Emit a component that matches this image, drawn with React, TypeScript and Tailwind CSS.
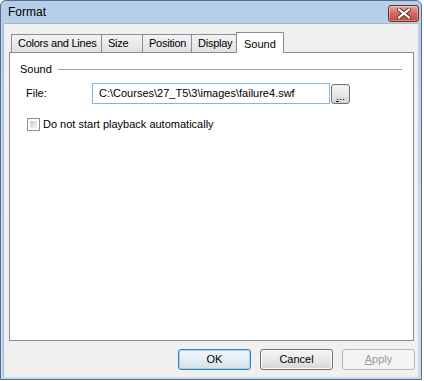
import React from "react";

const TABS = [
  { label: "Colors and Lines", w: "w-[91px]" },
  { label: "Size", w: "w-[42px]" },
  { label: "Position", w: "w-[50px]" },
  { label: "Display", w: "w-[46px]" },
];

const font = { fontFamily: '"Liberation Sans", Arial, sans-serif' };

const CloseButton = () => (
  <div className="w-[31px] h-[17px] rounded-[3px] border border-[#6b2f2a] bg-gradient-to-b from-[#e8a99f] via-[#d0695c] to-[#c44a3a] flex items-center justify-center shadow-[inset_0_0_0_1px_rgba(255,255,255,0.35)]">
    <svg width="14" height="11" viewBox="0 0 14 11">
      <path
        d="M2 1.5 L12 9.5 M12 1.5 L2 9.5"
        stroke="#5a2a24"
        strokeWidth="4"
        strokeLinecap="square"
      />
      <path
        d="M2 1.5 L12 9.5 M12 1.5 L2 9.5"
        stroke="#ffffff"
        strokeWidth="2.2"
        strokeLinecap="square"
      />
    </svg>
  </div>
);

const DialogButton = ({
  children,
  variant = "normal",
}: {
  children: React.ReactNode;
  variant?: "default" | "normal" | "disabled";
}) => {
  const base =
    "w-[73px] h-[21px] rounded-[3px] border flex items-center justify-center text-[11px]";
  const styles = {
    default:
      "border-[#3c7fb1] bg-gradient-to-b from-[#f2f7fb] via-[#e6eef5] to-[#d3e0ea] text-black shadow-[inset_0_0_0_1px_#9fd5f5]",
    normal:
      "border-[#707070] bg-gradient-to-b from-[#f4f4f4] via-[#e9e9e9] to-[#d6d6d6] text-black shadow-[inset_0_0_0_1px_#fcfcfc]",
    disabled: "border-[#b5b8bb] bg-[#f4f4f4] text-[#9a9a9a]",
  };
  return <div className={`${base} ${styles[variant]}`}>{children}</div>;
};

export default function App() {
  return (
    <div className="w-[424px] h-[381px] bg-white" style={font}>
      <div className="w-[422px] h-[380px] border border-[#566f8b] rounded-t-[6px] bg-gradient-to-b from-[#b6cee9] via-[#c4d8ee] to-[#c6daef] flex flex-col">
        {/* Title bar */}
        <div className="h-[22px] flex items-start justify-between">
          <span className="pl-[7px] pt-[4px] text-[12px] text-black leading-[14px]">
            Format
          </span>
          <div className="pt-[4px] pr-[2px]">
            <CloseButton />
          </div>
        </div>

        {/* Body */}
        <div className="ml-[2px] mr-[3px] mb-[2px] flex-1 bg-[#f0f0f0] border-t border-l border-[#a9b8c9] flex flex-col text-[11px] text-black">
          {/* Tabs */}
          <div className="pl-[7px] pt-[8px] h-[28px] flex items-end">
            {TABS.map((t) => (
              <div
                key={t.label}
                className={`${t.w} h-[18px] -mr-px border border-b-0 border-[#898c95] bg-gradient-to-b from-[#f3f3f3] to-[#e1e1e1] flex items-center pl-[6px] tracking-[-0.25px]`}
              >
                {t.label}
              </div>
            ))}
            <div className="w-[48px] h-[21px] -mb-px relative z-10 border border-b-0 border-[#898c95] bg-white flex items-start pl-[7px] pt-[3px]">
              Sound
            </div>
          </div>

          {/* Panel */}
          <div className="ml-[5px] w-[405px] h-[289px] border border-[#898c95] bg-white flex flex-col">
            <div className="mt-[9px] h-[14px] flex items-center pl-[10px] pr-[11px] gap-[6px]">
              <span>Sound</span>
              <div className="flex-1 h-px bg-[#a0a0a0]" />
            </div>

            <div className="mt-[7px] flex items-center pl-[16px]">
              <span className="w-[66px]">File:</span>
              <div className="w-[238px] h-[21px] border border-[#84b4e4] flex items-center pl-[6px]">
                C:\Courses\27_T5\3\images\failure4.swf
              </div>
              <div className="ml-[1px] w-[19px] h-[20px] rounded-[3px] border border-[#707070] bg-gradient-to-b from-[#f4f4f4] via-[#e9e9e9] to-[#d6d6d6] flex items-end justify-center pb-[2px] leading-[10px] text-[11px]">
                <span>
                  <span className="underline">.</span>..
                </span>
              </div>
            </div>

            <div className="mt-[12px] flex items-center pl-[17px] gap-[3px]">
              <div className="w-[13px] h-[13px] border border-[#8f8f8f] bg-white p-[2px]">
                <div className="w-full h-full bg-gradient-to-br from-[#cbcbcb] to-[#f4f4f4]" />
              </div>
              <span>Do not start playback automatically</span>
            </div>
          </div>

          {/* Buttons */}
          <div className="mt-[8px] flex justify-end gap-[9px] pr-[3px]">
            <DialogButton variant="default">OK</DialogButton>
            <DialogButton>Cancel</DialogButton>
            <DialogButton variant="disabled">
              <span>
                <span className="underline">A</span>pply
              </span>
            </DialogButton>
          </div>
        </div>
      </div>
    </div>
  );
}
